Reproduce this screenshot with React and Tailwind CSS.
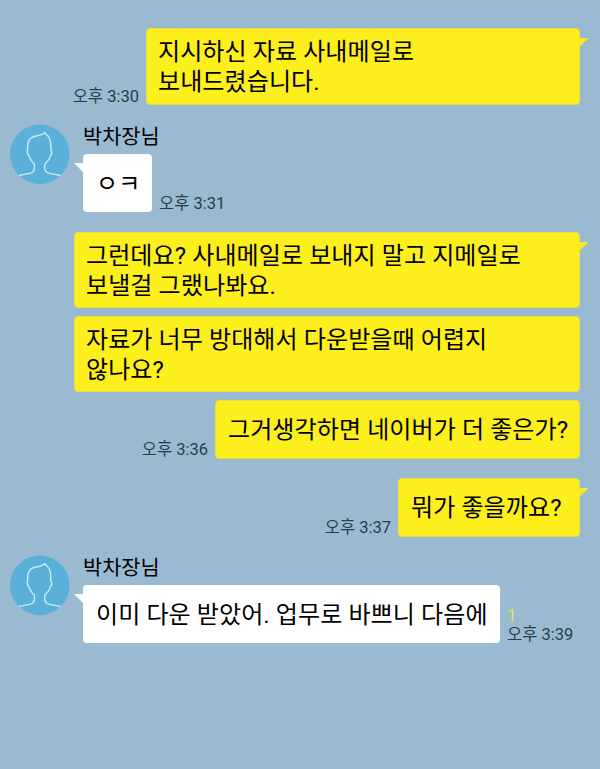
import React from 'react';

const sent = [
  { lines: ['지시하신 자료 사내메일로', '보내드렸습니다.'], time: '오후 3:30', timeClass: 'leading-4', tail: true, className: 'mt-7 w-[434px] h-[77px] pl-[11px]' },
  { lines: ['그런데요? 사내메일로 보내지 말고 지메일로', '보낼걸 그랬나봐요.'], tail: true, className: 'w-[506px] h-[76px] pl-[11px] pt-0.5' },
  { lines: ['자료가 너무 방대해서 다운받을때 어렵지', '않나요?'], className: 'mt-2 w-[506px] h-[76px] pl-[11px] pt-0.5' },
  { lines: ['그거생각하면 네이버가 더 좋은가?'], time: '오후 3:36', timeClass: 'leading-[18px]', className: 'mt-2 w-[365px] h-[59px] pl-3' },
  { lines: ['뭐가 좋을까요?'], time: '오후 3:37', timeClass: 'leading-[18px]', tail: true, className: 'mt-[19px] w-[182px] h-[59px] pl-3' },
];

function Avatar() {
  return (
    <svg className="h-[60px] w-[60px] shrink-0" viewBox="0 0 60 60" fill="none">
      <circle cx="29.8" cy="30.2" r="29.8" fill="#5bb0d9" />
      <path
        d="M9 51.5C14 49.8 19 50.3 22 48.5C24.7 47 24.8 43.5 24.3 40C21.5 37.5 19.5 34.5 18.9 31C17 30.5 16.8 27.5 17.6 26C17.3 21 17.8 16.5 21 14C25 11 31 12.5 35 8.5C36 11 37.5 11 39 13.5C41 17 41 21 40.8 26C42.5 27.5 42 30.5 40.6 31C40 34.5 37.7 37.5 34.9 40C34.3 43.5 34.5 47 37.2 48.5C40.5 50.3 45 49.8 50.5 51.5"
        stroke="#c4efff"
        strokeWidth="1.4"
        strokeLinejoin="round"
      />
    </svg>
  );
}

function Time({ children, className }) {
  return <span className={`whitespace-nowrap text-[16.5px] text-[#2b3d4a] ${className}`}>{children}</span>;
}

function SentMessage({ lines, time, timeClass, tail, className }) {
  return (
    <div className="flex items-end justify-end gap-[7px] pr-5">
      {time && <Time className={timeClass}>{time}</Time>}
      <div className={`relative flex shrink-0 flex-col justify-center rounded-[4px] border border-[#e2e04c] bg-[#fcef1c] ${className}`}>
        {lines.map((line) => (
          <p key={line} className="whitespace-nowrap text-2xl leading-[30px] tracking-[0.1px]">{line}</p>
        ))}
        {tail && (
          <svg className="absolute -right-[10px] top-[9px] h-[10px] w-[10px]" viewBox="0 0 10 10">
            <path d="M0 0H9.5L0 9.5Z" fill="#f5e92b" />
          </svg>
        )}
      </div>
    </div>
  );
}

function ReceivedMessage({ text, time, unread, className }) {
  return (
    <div className="flex pl-[10px]">
      <Avatar />
      <div className="ml-[13px]">
        <div className="h-[30px] text-[20.8px] leading-[26px]">박차장님</div>
        <div className="flex items-end gap-[7px]">
          <div className={`relative flex h-[58px] items-center rounded-[4px] bg-white pt-0.5 ${className}`}>
            <svg className="absolute -left-[9px] top-[9px] h-[10px] w-[10px]" viewBox="0 0 10 10">
              <path d="M0 0H10V10Z" fill="#fff" />
            </svg>
            <p className="whitespace-nowrap text-2xl leading-[30px] tracking-[0.1px]">{text}</p>
          </div>
          <div className="flex flex-col">
            {unread && <span className="text-[16.5px] leading-[22px] text-[#e8e34a]">{unread}</span>}
            <Time className="leading-4">{time}</Time>
          </div>
        </div>
      </div>
    </div>
  );
}

export default function App() {
  return (
    <div className="h-[769px] w-[600px] overflow-hidden bg-[#9abad1] font-['Roboto','Noto_Sans_CJK_KR',sans-serif] text-black">
      <SentMessage {...sent[0]} />
      <div className="mb-5 mt-[19px]">
        <ReceivedMessage text="ㅇㅋ" time="오후 3:31" className="w-[69px] pl-[13px]" />
      </div>
      {sent.slice(1).map((msg) => (
        <SentMessage key={msg.lines[0]} {...msg} />
      ))}
      <div className="mt-[18px]">
        <ReceivedMessage text="이미 다운 받았어. 업무로 바쁘니 다음에" time="오후 3:39" unread="1" className="w-[417px] pl-[13px]" />
      </div>
    </div>
  );
}
